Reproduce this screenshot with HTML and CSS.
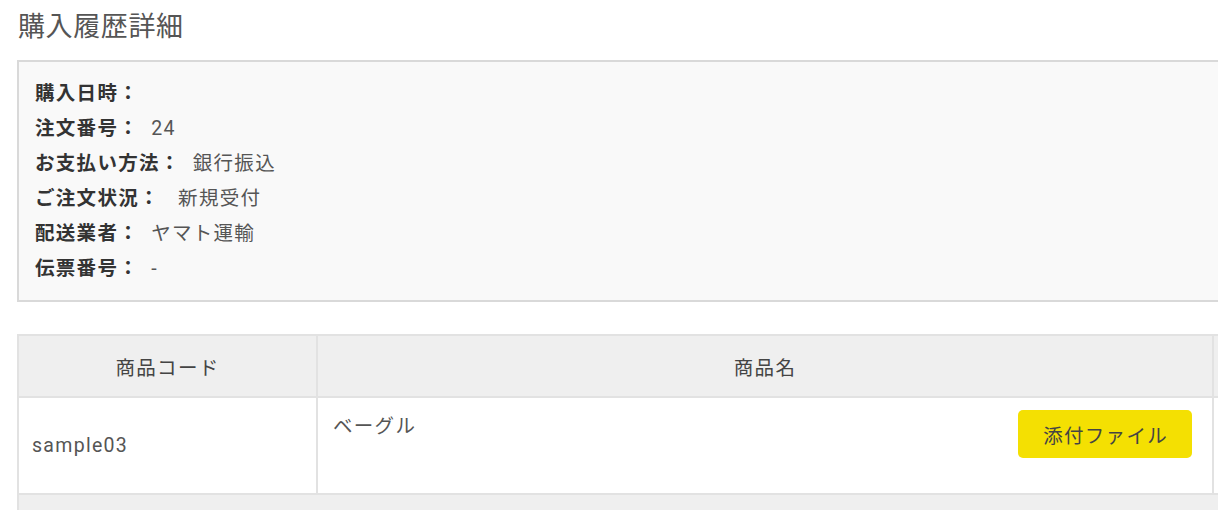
FILE: index.html
```html
<!DOCTYPE html>
<html lang="ja">
  <head>
    <meta charset="UTF-8" />
    <meta name="viewport" content="width=device-width, initial-scale=1.0" />
    <title>購入履歴詳細</title>
    <link rel="stylesheet" href="styles.css">
  </head>
  <body>
    <div class="page">
      <h1 class="title">購入履歴詳細</h1>

      <div class="order-info">
        <p class="info-row"><span class="info-label">購入日時：</span></p>
        <p class="info-row"><span class="info-label">注文番号：</span> 24</p>
        <p class="info-row"><span class="info-label">お支払い方法：</span> 銀行振込</p>
        <p class="info-row"><span class="info-label">ご注文状況：</span>&nbsp; 新規受付</p>
        <p class="info-row"><span class="info-label">配送業者：</span> ヤマト運輸</p>
        <p class="info-row"><span class="info-label">伝票番号：</span> -</p>
      </div>

      <table class="items">
        <thead>
          <tr>
            <th class="col-code">商品コード</th>
            <th class="col-name">商品名</th>
            <th class="col-price"></th>
          </tr>
        </thead>
        <tbody>
          <tr>
            <td class="cell-code">sample03</td>
            <td class="cell-name">
              <div class="name-wrap">
                <span class="item-name">ベーグル</span>
                <button class="attach-btn">添付ファイル</button>
              </div>
            </td>
            <td class="cell-price"></td>
          </tr>
          <tr class="total-row">
            <td colspan="3">&nbsp;</td>
          </tr>
        </tbody>
      </table>
    </div>
  </body>
</html>
```

FILE: styles.css
```css
html,
body {
  overflow: hidden;
}

body {
  margin: 0;
  background: #fff;
  color: #555;
  font-family: Roboto, "Noto Sans CJK JP", sans-serif;
  letter-spacing: 1.3px;
}

* {
  box-sizing: border-box;
}

.page {
  width: 1420px;
  padding-left: 17px;
}

.title {
  margin: 0;
  padding: 10px 0 0 1px;
  font-size: 27px;
  font-weight: normal;
  line-height: 34px;
  letter-spacing: 0.6px;
  color: #555;
}

.order-info {
  margin-top: 16px;
  padding: 14px 16px;
  background: #f9f9f9;
  border: 2px solid #d9d9d9;
}

.info-row {
  margin: 0;
  font-size: 19.5px;
  line-height: 35px;
  color: #555;
}

.info-label {
  margin-right: 6px;
  font-weight: bold;
  color: #333;
}

.items {
  margin-top: 32px;
  border-collapse: collapse;
  font-size: 19.5px;
  color: #555;
}

.items th,
.items td {
  border: 2px solid #e2e2e2;
}

.items th {
  height: 62px;
  background: #efefef;
  font-weight: normal;
  color: #444;
  text-align: center;
}

.col-code {
  width: 299px;
}

.col-name {
  width: 896px;
}

.col-price {
  width: 200px;
}

.items td {
  height: 97px;
  background: #fff;
}

.cell-code {
  padding: 0 13px;
  vertical-align: middle;
}

.cell-name {
  padding: 12px 20px 12px 15px;
  vertical-align: top;
}

.name-wrap {
  display: flex;
  justify-content: space-between;
  align-items: flex-start;
}

.item-name {
  line-height: 34px;
}

.attach-btn {
  height: 48px;
  padding: 0 24px 0 25px;
  border: none;
  border-radius: 5px;
  background: #f4e002;
  color: #444;
  font-family: inherit;
  font-size: 19.5px;
  letter-spacing: 1.3px;
  cursor: pointer;
}

.total-row td {
  height: 60px;
  background: #efefef;
}
```
